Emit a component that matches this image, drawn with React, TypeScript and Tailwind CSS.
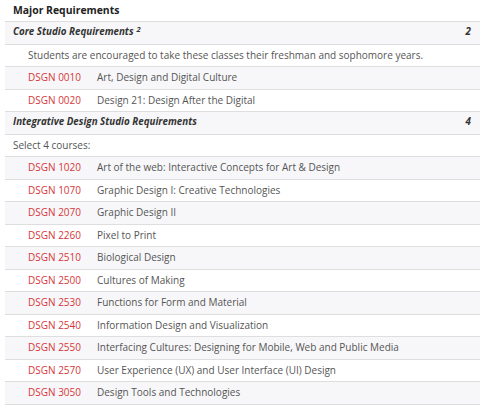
import React from "react";

type Row =
  | { kind: "header"; title: string; sup?: string; hours: string }
  | { kind: "note"; text: string; indent: boolean }
  | { kind: "course"; code: string; title: string };

const rows: Row[] = [
  { kind: "header", title: "Core Studio Requirements", sup: "2", hours: "2" },
  { kind: "note", text: "Students are encouraged to take these classes their freshman and sophomore years.", indent: true },
  { kind: "course", code: "DSGN 0010", title: "Art, Design and Digital Culture" },
  { kind: "course", code: "DSGN 0020", title: "Design 21: Design After the Digital" },
  { kind: "header", title: "Integrative Design Studio Requirements", hours: "4" },
  { kind: "note", text: "Select 4 courses:", indent: false },
  { kind: "course", code: "DSGN 1020", title: "Art of the web: Interactive Concepts for Art & Design" },
  { kind: "course", code: "DSGN 1070", title: "Graphic Design I: Creative Technologies" },
  { kind: "course", code: "DSGN 2070", title: "Graphic Design II" },
  { kind: "course", code: "DSGN 2260", title: "Pixel to Print" },
  { kind: "course", code: "DSGN 2510", title: "Biological Design" },
  { kind: "course", code: "DSGN 2500", title: "Cultures of Making" },
  { kind: "course", code: "DSGN 2530", title: "Functions for Form and Material" },
  { kind: "course", code: "DSGN 2540", title: "Information Design and Visualization" },
  { kind: "course", code: "DSGN 2550", title: "Interfacing Cultures: Designing for Mobile, Web and Public Media" },
  { kind: "course", code: "DSGN 2570", title: "User Experience (UX) and User Interface (UI) Design" },
  { kind: "course", code: "DSGN 3050", title: "Design Tools and Technologies" },
];

export default function App() {
  return (
    <div
      className="w-[485px] h-[409px] bg-white overflow-hidden text-[10px] text-[#555]"
      style={{ fontFamily: '"Open Sans", sans-serif' }}
    >
      <div className="pl-[13px] pt-[2px] h-[21px] font-bold text-[#222] text-[10.4px] leading-[16px]">
        Major Requirements
      </div>
      <div className="mx-[5px] w-[475px]">
        {rows.map((r, i) => {
          const bg = i % 2 === 0 ? "bg-[#f7f7f9]" : "bg-white";
          const base = `h-[22.5px] border-t border-[#dedede] flex items-center whitespace-nowrap ${bg}`;
          if (r.kind === "header") {
            return (
              <div key={i} className={`${base} justify-between pl-[8px] pr-[9px] font-bold italic text-[#333] text-[9.8px]`}>
                <span>
                  {r.title}
                  {r.sup && <sup className="ml-[3px] text-[7.5px]">{r.sup}</sup>}
                </span>
                <span>{r.hours}</span>
              </div>
            );
          }
          if (r.kind === "note") {
            return (
              <div key={i} className={`${base} ${r.indent ? "pl-[23px]" : "pl-[8px]"}`}>
                {r.text}
              </div>
            );
          }
          return (
            <div key={i} className={`${base} pl-[23px]`}>
              <span className="w-[69px] shrink-0 text-[#d6363b]">{r.code}</span>
              <span>{r.title}</span>
            </div>
          );
        })}
        <div className="border-t border-[#dedede]" />
      </div>
    </div>
  );
}
